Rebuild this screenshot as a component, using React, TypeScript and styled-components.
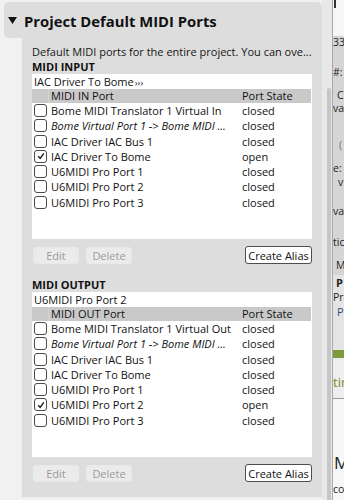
import styled, { createGlobalStyle } from "styled-components";

const GlobalStyle = createGlobalStyle`
  html, body {
    margin: 0;
    padding: 0;
    background: #f1f1f1;
  }
  body {
    font-family: "Open Sans", "Liberation Sans", sans-serif;
    color: #111;
  }
`;

type Port = {
  name: string;
  state: string;
  checked?: boolean;
  italic?: boolean;
};

const inputPorts: Port[] = [
  { name: "Bome MIDI Translator 1 Virtual In", state: "closed" },
  { name: "Bome Virtual Port 1 -> Bome MIDI ...", state: "closed", italic: true },
  { name: "IAC Driver IAC Bus 1", state: "closed" },
  { name: "IAC Driver To Bome", state: "open", checked: true },
  { name: "U6MIDI Pro Port 1", state: "closed" },
  { name: "U6MIDI Pro Port 2", state: "closed" },
  { name: "U6MIDI Pro Port 3", state: "closed" },
];

const outputPorts: Port[] = [
  { name: "Bome MIDI Translator 1 Virtual Out", state: "closed" },
  { name: "Bome Virtual Port 1 -> Bome MIDI ...", state: "closed", italic: true },
  { name: "IAC Driver IAC Bus 1", state: "closed" },
  { name: "IAC Driver To Bome", state: "closed" },
  { name: "U6MIDI Pro Port 1", state: "closed" },
  { name: "U6MIDI Pro Port 2", state: "open", checked: true },
  { name: "U6MIDI Pro Port 3", state: "closed" },
];

const Root = styled.div`
  display: flex;
  width: 344px;
  height: 500px;
  overflow: hidden;
`;

const Main = styled.div`
  width: 322px;
  flex-shrink: 0;
  padding-top: 2px;
  background: #f1f1f1;
`;

const SectionHeader = styled.div`
  display: flex;
  align-items: center;
  gap: 7px;
  margin-left: 4px;
  height: 36px;
  padding-left: 4px;
  background: #dddddd;
  border-radius: 5px 5px 0 5px;
`;

const Title = styled.div`
  font-size: 14.8px;
  font-weight: 700;
  color: #111;
  margin-top: 1px;
`;

const SectionBody = styled.div`
  margin-left: 22px;
  width: 300px;
  box-sizing: border-box;
  padding: 6px 10px 15px 10px;
  background: #dddddd;
`;

const Description = styled.div`
  font-size: 11px;
  line-height: 15px;
  white-space: nowrap;
  color: #151515;
`;

const GroupLabel = styled.div<{ $gap?: number }>`
  font-size: 11px;
  font-weight: 700;
  line-height: 14px;
  margin-top: ${(p) => p.$gap ?? 1}px;
`;

const ListBox = styled.div`
  background: #ffffff;
  height: 165px;
  overflow: hidden;
`;

const Selected = styled.div`
  height: 14.7px;
  line-height: 15px;
  padding-left: 2px;
  font-size: 11px;
`;

const Chevrons = styled.span`
  font-size: 9px;
  letter-spacing: 0.2px;
  margin-left: 1px;
`;

const cols = "17px 191px 1fr";

const HeaderRow = styled.div`
  display: grid;
  grid-template-columns: ${cols};
  height: 14px;
  line-height: 14px;
  font-size: 11px;
  background: #c9c9c9;
  margin-right: 1px;
`;

const HeaderCell = styled.div<{ $first?: boolean }>`
  padding-left: 2px;
  white-space: nowrap;
  border-right: ${(p) => (p.$first ? "1px solid #d4d4d4" : "none")};
`;

const Row = styled.div`
  display: grid;
  grid-template-columns: ${cols};
  height: 15.33px;
  align-items: center;
  font-size: 11px;
`;

const Cell = styled.div<{ $italic?: boolean }>`
  padding-left: 2px;
  white-space: nowrap;
  overflow: hidden;
  font-style: ${(p) => (p.$italic ? "italic" : "normal")};
  line-height: 15px;
`;

const Box = styled.div`
  width: 13px;
  height: 13px;
  box-sizing: border-box;
  margin-left: 2px;
  border: 1px solid #4a4a4a;
  border-radius: 3px;
  background: #fff;
  display: flex;
  align-items: center;
  justify-content: center;
`;

const ButtonBar = styled.div`
  display: flex;
  align-items: center;
  gap: 7px;
  margin-top: 7px;
  padding-left: 1px;
`;

const Button = styled.button<{ $disabled?: boolean }>`
  height: 17px;
  padding: 0;
  font-family: inherit;
  font-size: 11px;
  line-height: 15px;
  border-radius: 3px;
  border: ${(p) => (p.$disabled ? "1px solid #e9e9e9" : "1px solid #4d4d4d")};
  background: ${(p) => (p.$disabled ? "#ebebeb" : "#ffffff")};
  color: ${(p) => (p.$disabled ? "#9b9b9b" : "#111")};
  width: 46px;
`;

const AliasButton = styled(Button)`
  margin-left: auto;
  width: 67px;
  height: 18px;
`;

const Gutter = styled.div`
  width: 10px;
  flex-shrink: 0;
  background: #e8e8e8;
  display: flex;
  justify-content: flex-end;
`;

const ScrollThumb = styled.div`
  width: 4px;
  margin: 88px 1px 0 0;
  height: 420px;
  background: #c6c6c6;
  border-radius: 2px 2px 0 0;
`;

const Divider = styled.div`
  width: 1px;
  flex-shrink: 0;
  background: #a8a8a8;
`;

const Side = styled.div`
  width: 11px;
  flex-shrink: 0;
  display: flex;
  flex-direction: column;
  overflow: hidden;
`;

const SideBand = styled.div<{ $h?: number; $bg: string }>`
  height: ${(p) => (p.$h ? `${p.$h}px` : "auto")};
  flex: ${(p) => (p.$h ? "0 0 auto" : "1")};
  background: ${(p) => p.$bg};
  display: flex;
  flex-direction: column;
  overflow: hidden;
`;

const SideText = styled.div<{
  $mt: number;
  $x?: number;
  $color?: string;
  $bold?: boolean;
  $size?: number;
  $h?: number;
}>`
  margin-top: ${(p) => p.$mt}px;
  padding-left: ${(p) => p.$x ?? 0}px;
  height: ${(p) => p.$h ?? 10}px;
  line-height: ${(p) => p.$h ?? 10}px;
  font-size: ${(p) => p.$size ?? 10.5}px;
  font-weight: ${(p) => (p.$bold ? 700 : 400)};
  color: ${(p) => p.$color ?? "#222"};
  white-space: nowrap;
`;

const TopMark = styled.div`
  width: 2px;
  height: 8px;
  margin-left: 1px;
  background: #333;
`;

const Rule = styled.div`
  height: 1px;
  flex-shrink: 0;
  background: #9a9a9a;
`;

const Triangle = () => (
  <svg width="9" height="7" viewBox="0 0 9 7">
    <polygon points="0,0 9,0 4.5,7" fill="#111" />
  </svg>
);

const Check = ({ on }: { on?: boolean }) => (
  <Box>
    {on && (
      <svg width="8" height="8" viewBox="0 0 8 8">
        <polyline
          points="1.2,4.2 3.2,6.4 6.8,1.4"
          fill="none"
          stroke="#222"
          strokeWidth="1.5"
        />
      </svg>
    )}
  </Box>
);

const PortList = ({
  current,
  heading,
  ports,
}: {
  current: React.ReactNode;
  heading: string;
  ports: Port[];
}) => (
  <ListBox>
    <Selected>{current}</Selected>
    <HeaderRow>
      <HeaderCell $first />
      <HeaderCell>{heading}</HeaderCell>
      <HeaderCell>Port State</HeaderCell>
    </HeaderRow>
    {ports.map((p) => (
      <Row key={p.name + p.state}>
        <Check on={p.checked} />
        <Cell $italic={p.italic}>{p.name}</Cell>
        <Cell>{p.state}</Cell>
      </Row>
    ))}
  </ListBox>
);

const Buttons = () => (
  <ButtonBar>
    <Button $disabled>Edit</Button>
    <Button $disabled>Delete</Button>
    <AliasButton>Create Alias</AliasButton>
  </ButtonBar>
);

export default function App() {
  return (
    <>
      <GlobalStyle />
      <Root>
        <Main>
          <SectionHeader>
            <Triangle />
            <Title>Project Default MIDI Ports</Title>
          </SectionHeader>
          <SectionBody>
            <Description>
              Default MIDI ports for the entire project. You can ove...
            </Description>
            <GroupLabel>MIDI INPUT</GroupLabel>
            <PortList
              current={
                <>
                  IAC Driver To Bome<Chevrons>›››</Chevrons>
                </>
              }
              heading="MIDI IN Port"
              ports={inputPorts}
            />
            <Buttons />
            <GroupLabel $gap={14}>MIDI OUTPUT</GroupLabel>
            <PortList
              current="U6MIDI Pro Port 2"
              heading="MIDI OUT Port"
              ports={outputPorts}
            />
            <Buttons />
          </SectionBody>
        </Main>
        <Gutter>
          <ScrollThumb />
        </Gutter>
        <Divider />
        <Side>
          <SideBand $h={36} $bg="#f6f6f6">
            <TopMark />
          </SideBand>
          <SideBand $h={239} $bg="#d5d5d5">
            <SideText $mt={1}>33</SideText>
            <SideText $mt={20}>#:</SideText>
            <SideText $mt={13} $x={4}>C</SideText>
            <SideText $mt={3}>va</SideText>
            <SideText $mt={27} $x={6} $color="#777">(</SideText>
            <SideText $mt={13}>e:</SideText>
            <SideText $mt={4} $x={5}>v</SideText>
            <SideText $mt={19}>va</SideText>
            <SideText $mt={21}>tic</SideText>
            <SideText $mt={13} $x={3}>M</SideText>
          </SideBand>
          <SideBand $h={75} $bg="#e4e4e4">
            <SideText $mt={2} $x={3} $bold $size={11} $h={11}>P</SideText>
            <SideText $mt={4}>Pre</SideText>
            <SideText $mt={4} $x={4} $color="#2f4f7a" $size={11} $h={11}>P</SideText>
          </SideBand>
          <SideBand $h={8} $bg="#7d9a3c" />
          <SideBand $h={40} $bg="#eeeeee">
            <SideText $mt={18} $color="#6d8e2a" $size={13} $h={12}>tir</SideText>
          </SideBand>
          <Rule />
          <SideBand $bg="#f7f7f7">
            <SideText $mt={56} $x={1} $size={17} $h={16}>M</SideText>
            <SideText $mt={13}>co</SideText>
          </SideBand>
        </Side>
      </Root>
    </>
  );
}
